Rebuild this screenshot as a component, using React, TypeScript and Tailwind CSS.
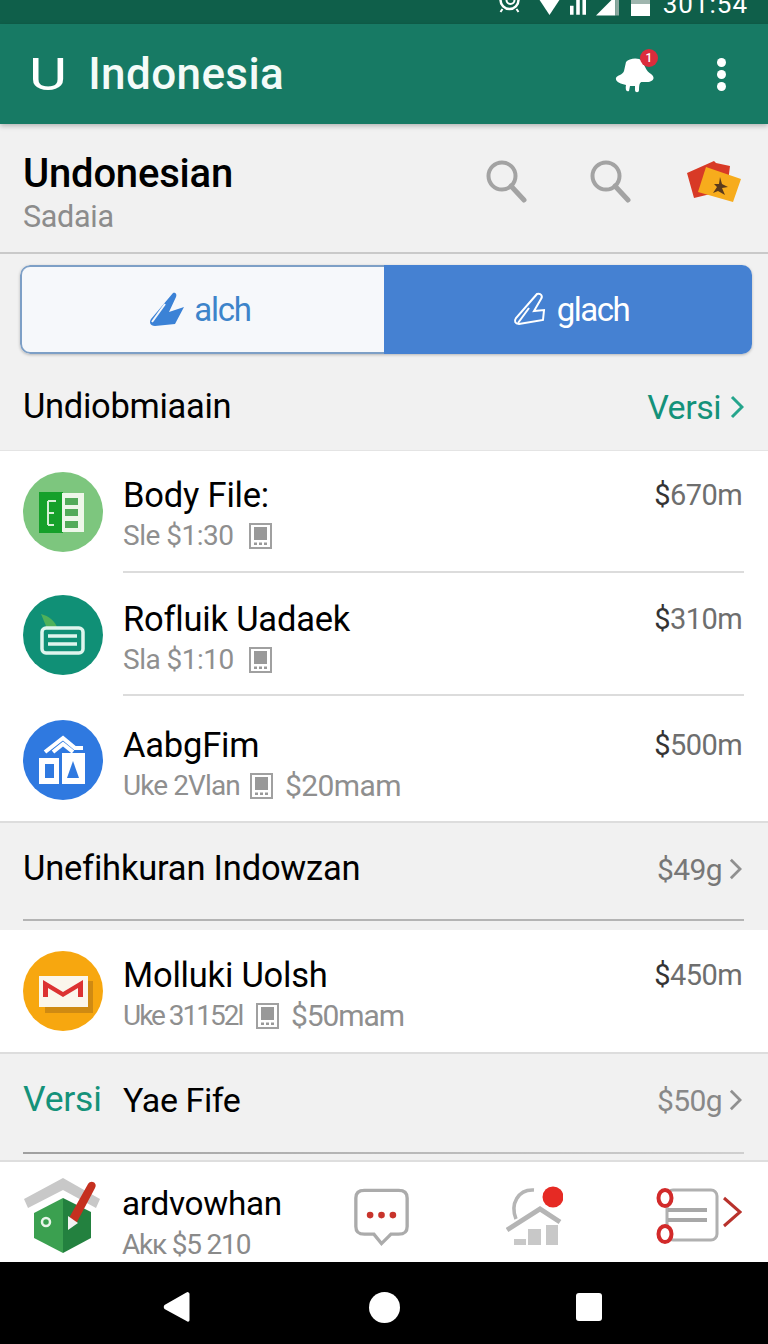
import React from "react";

const font = { fontFamily: "Roboto, 'Noto Sans', sans-serif" };

function Search({ className }: { className: string }) {
  return (
    <svg className={className} viewBox="0 0 42 44" fill="none">
      <circle cx="17" cy="17" r="13.5" stroke="#a3a3a3" strokeWidth="4" />
      <path d="M26 27 L39 41" stroke="#a3a3a3" strokeWidth="5" strokeLinecap="round" />
    </svg>
  );
}

function Device() {
  return (
    <svg className="h-[26px] w-[23px] shrink-0" viewBox="0 0 23 26">
      <rect x="1" y="1" width="21" height="24" fill="#fff" stroke="#a0a0a0" strokeWidth="2" />
      <rect x="5" y="4" width="13" height="13" fill="#999" />
      <rect x="5" y="19.5" width="3" height="2.5" fill="#999" />
      <rect x="10" y="19.5" width="3" height="2.5" fill="#999" />
      <rect x="15" y="19.5" width="3" height="2.5" fill="#999" />
    </svg>
  );
}

function Sheets() {
  return (
    <svg className="h-[80px] w-[80px]" viewBox="0 0 80 80">
      <circle cx="40" cy="40" r="40" fill="#7dc67e" />
      <rect x="16" y="20" width="24" height="41" fill="#15a02a" />
      <rect x="39" y="21" width="22" height="39" fill="#eef7ea" />
      <path d="M25 29h8M25 29v24M25 41h6M25 53h6" stroke="#d6f0d6" strokeWidth="2" fill="none" />
      <rect x="42" y="26" width="13" height="7" fill="#53ab5a" />
      <rect x="42" y="37" width="13" height="7" fill="#53ab5a" />
      <rect x="42" y="49" width="13" height="7" fill="#53ab5a" />
    </svg>
  );
}

function Card() {
  return (
    <svg className="h-[80px] w-[80px]" viewBox="0 0 80 80">
      <circle cx="40" cy="40" r="40" fill="#109076" />
      <path d="M18 19 C26 21 32 26 35 34 L24 34 C22 28 20 24 18 19Z" fill="#4fb15a" />
      <rect x="19" y="33" width="41" height="25" rx="4" fill="none" stroke="#dff5ee" strokeWidth="3.5" />
      <path d="M25 41h29M25 49h29" stroke="#dff5ee" strokeWidth="3.5" />
    </svg>
  );
}

function Shop() {
  return (
    <svg className="h-[80px] w-[80px]" viewBox="0 0 80 80">
      <circle cx="40" cy="40" r="40" fill="#2f79e0" />
      <path d="M22 32 L40 18 L52 28 L60 28 M30 32 L40 24 L50 32" stroke="#fff" strokeWidth="4" fill="none" />
      <rect x="16" y="38" width="20" height="26" fill="#fff" />
      <rect x="22" y="44" width="9" height="14" fill="#2f79e0" />
      <rect x="39" y="33" width="23" height="31" fill="#fff" />
      <path d="M50 41 L56 58 L44 58Z" fill="#2f79e0" />
    </svg>
  );
}

function Mail() {
  return (
    <svg className="h-[80px] w-[80px]" viewBox="0 0 80 80">
      <circle cx="40" cy="40" r="40" fill="#f7a70f" />
      <rect x="22" y="30" width="48" height="32" fill="#cf8a12" />
      <rect x="16" y="25" width="49" height="31" fill="#fbf6ec" />
      <path d="M20 29 L40 41 L60 29 L60 46 L55 46 L55 37 L40 46 L25 37 L25 46 L20 46Z" fill="#dc3232" />
    </svg>
  );
}

type RowProps = {
  icon: React.ReactNode;
  title: string;
  left: string;
  right?: string;
  rightClass?: string;
  price: string;
  rowClass: string;
  bodyClass: string;
  leftClass: string;
  divider?: boolean;
};

function Row({ icon, title, left, right, rightClass, price, rowClass, bodyClass, leftClass, divider }: RowProps) {
  return (
    <div className={`flex bg-white pl-[23px] pr-6 ${rowClass}`}>
      <div className="mr-5 flex items-center">{icon}</div>
      <div className={`flex min-w-0 flex-1 ${bodyClass} ${divider ? "border-b-2 border-[#dcdcdc]" : ""}`}>
        <div className="flex-1">
          <div className="text-[34.5px] leading-[40px] tracking-[-0.2px] text-black">{title}</div>
          <div className="mt-[4px] flex items-center text-[28px] leading-[34px] tracking-[-0.5px] text-[#8f8f8f]">
            <span className={`shrink-0 whitespace-nowrap ${leftClass}`}>{left}</span>
            <Device />
            {right && <span className={`ml-[12px] text-[30px] ${rightClass}`}>{right}</span>}
          </div>
        </div>
        <div className="mr-[2px] text-[29px] leading-[40px] tracking-[-0.6px] text-[#6e6e6e]">
          <span className="text-[#333]">$</span>
          {price}
        </div>
      </div>
    </div>
  );
}

function Chevron({ color, className }: { color: string; className: string }) {
  return (
    <svg className={className} viewBox="0 0 14 24" fill="none">
      <path d="M2 2 L12 12 L2 22" stroke={color} strokeWidth="3" />
    </svg>
  );
}

export default function App() {
  return (
    <div className="flex h-[1344px] w-[768px] flex-col overflow-hidden bg-[#f1f1f1]" style={font}>
      <div className="flex h-6 shrink-0 items-start justify-end overflow-hidden bg-[#0f5f4a] pr-[20px]">
        <div className="-mt-2 flex h-[24px] items-center text-white">
          <svg className="mr-[13px] h-[22px] w-[25px]" viewBox="0 0 24 22" fill="none">
            <circle cx="12" cy="7" r="9" stroke="#fff" strokeWidth="2.5" />
            <circle cx="13" cy="7" r="4" stroke="#fff" strokeWidth="2" />
            <path d="M5 16l-2 3M19 16l2 3" stroke="#fff" strokeWidth="2" />
          </svg>
          <svg className="mr-[6px] h-[24px] w-[29px]" viewBox="0 0 32 24">
            <path d="M0 0 H32 L16 24Z" fill="#fff" />
          </svg>
          <svg className="mr-[10px] h-[24px] w-[16px]" viewBox="0 0 18 24">
            <path d="M0 14h4v10H0zM7 7h4v17H7zM14 0h4v24h-4z" fill="#fff" />
          </svg>
          <svg className="mr-[12px] h-[24px] w-[23px]" viewBox="0 0 24 24">
            <path d="M0 24 L20 4 V24Z" fill="#fff" />
            <path d="M20 0h4v24h-4z" fill="#8aa89f" />
          </svg>
          <div className="mr-[13px] flex h-[24px] w-[19px] flex-col">
            <div className="h-[12px] bg-[#9fb5ae]" />
            <div className="h-[12px] bg-white" />
          </div>
          <span className="text-[26px] leading-[24px] tracking-[1px]">301:54</span>
        </div>
      </div>

      <header className="z-10 flex h-[100px] shrink-0 items-center bg-[#177a64] pl-[29px] pr-[42px] shadow-[0_2px_5px_rgba(0,0,0,0.25)]">
        <span className="origin-left scale-x-[1.3] text-[45px] leading-none text-white">U</span>
        <span className="ml-[30px] flex-1 text-[44px] font-medium leading-none tracking-[0.4px] text-[#f4fbf8]">Indonesia</span>
        <div className="relative mr-[62px] mt-[6px] h-[40px] w-[40px]">
          <svg className="h-[40px] w-[40px]" viewBox="0 0 40 40">
            <path
              d="M11 5 C14 1 24 0 27 4 C30 9 31 14 36 17 C41 21 38 25 32 25 L27 25 C25 25 24 27 24 33 C24 36 20 36 20 33 L20 29 L15 29 L14 34 C12 35 10 34 11 28 C6 27 0 25 1 21 C2 18 8 18 9 14Z"
              fill="#fff"
            />
          </svg>
          <span className="absolute right-[-3px] top-[-8px] flex h-[18px] w-[18px] items-center justify-center rounded-full bg-[#dc2c3c] text-[12px] font-medium leading-none text-white">
            1
          </span>
        </div>
        <div className="flex flex-col gap-[3px]">
          <span className="h-[9px] w-[9px] rounded-full bg-white" />
          <span className="h-[9px] w-[9px] rounded-full bg-white" />
          <span className="h-[9px] w-[9px] rounded-full bg-white" />
        </div>
      </header>

      <section className="flex h-[130px] shrink-0 items-center border-b-2 border-[#c9c9c9] pl-[23px] pr-[27px]">
        <div className="mt-[10px] flex-1">
          <div className="text-[40px] font-medium leading-[46px] tracking-[-0.2px] text-black">Undonesian</div>
          <div className="mt-[2px] text-[30.5px] leading-[36px] tracking-[-0.3px] text-[#8c8c8c]">Sadaia</div>
        </div>
        <Search className="mb-[14px] mr-[62px] h-[44px] w-[42px]" />
        <Search className="mb-[14px] mr-[56px] h-[44px] w-[42px]" />
        <svg className="mb-[14px] h-[42px] w-[54px]" viewBox="0 0 54 42">
          <path d="M0 13 L27 1 L29 3 L43 6 L40 30 L7 38Z" fill="#d83a26" />
          <path d="M19 7 L54 19 L46 42 L11 32Z" fill="#f7ac1c" />
          <path d="M33 17 L35 24 L41 27 L35 28 L38 35 L31 31 L26 33 L30 27 L27 24 L32 24Z" fill="#5a3a1c" />
        </svg>
      </section>

      <div className="ml-5 mt-[11px] flex h-[89px] w-[732px] shrink-0 overflow-hidden rounded-[10px] shadow-[0_1px_3px_rgba(0,0,0,0.25)]">
        <div className="flex w-[364px] items-center justify-center gap-[9px] rounded-l-[10px] border-2 border-r-0 border-[#7d9fc6] bg-[#f6f8fb] pr-[6px] text-[33px] tracking-[-1.2px] text-[#3d84ca]">
          <svg className="h-[36px] w-[36px]" viewBox="0 0 36 36">
            <path d="M24 1 C27 0 28 3 27 5 L20 20 L35 15 L26 32 L6 34 C1 34 0 30 2 27 Z" fill="#3b82d6" />
            <path d="M3 30 L16 12" stroke="#f6f8fb" strokeWidth="2" />
          </svg>
          <span>alch</span>
        </div>
        <div className="flex flex-1 items-center justify-center gap-[8px] bg-[#4581d2] pl-[6px] text-[33px] tracking-[-1.5px] text-white">
          <svg className="h-[36px] w-[36px]" viewBox="0 0 36 36" fill="none">
            <path d="M24 2 C28 1 30 4 28 7 L21 19 L31 18 L30 28 L6 32 C2 32 1 29 3 26 Z" stroke="#fff" strokeWidth="2" />
            <path d="M5 31 L16 16" stroke="#fff" strokeWidth="2" />
          </svg>
          <span>glach</span>
        </div>
      </div>

      <div className="flex h-[97px] shrink-0 items-center justify-between border-b border-[#e4e4e4] pl-[23px] pr-6 pt-[10px]">
        <span className="text-[34.5px] tracking-[-0.3px] text-black">Undiobmiaain</span>
        <span className="flex items-center gap-[9px] text-[34px] tracking-[-0.5px] text-[#14927a]">
          Versi
          <Chevron color="#25a58c" className="h-[24px] w-[14px]" />
        </span>
      </div>

      <Row icon={<Sheets />} title="Body File:" left="Sle $1:30" price="670m" rowClass="h-[122px]" bodyClass="pt-[24px]" leftClass="w-[126px]" divider />
      <Row icon={<Card />} title="Rofluik Uadaek" left="Sla $1:10" price="310m" rowClass="h-[123px]" bodyClass="pt-[26px]" leftClass="w-[126px]" divider />
      <Row icon={<Shop />} title="AabgFim" left="Uke 2Vlan" right="$20mam" rightClass="tracking-[-0.6px]" price="500m" rowClass="h-[125px] pt-[2px]" bodyClass="pt-[27px]" leftClass="w-[127px] tracking-[-0.9px]" />

      <div className="flex h-[109px] shrink-0 flex-col border-t-2 border-[#dddddd] pl-[23px] pr-6">
        <div className="flex h-[96px] items-center justify-between pb-[4px]">
          <span className="text-[34.5px] tracking-[-0.2px] text-black">Unefihkuran Indowzan</span>
          <span className="flex items-center gap-[7px] text-[30px] tracking-[-0.6px] text-[#777]">
            $49g
            <Chevron color="#909090" className="mr-[2px] h-[24px] w-[13px]" />
          </span>
        </div>
        <div className="h-[2px] bg-[#b4b4b4]" />
      </div>

      <Row icon={<Mail />} title="Molluki Uolsh" left="Uke 31152l" right="$50mam" rightClass="tracking-[-1.1px]" price="450m" rowClass="h-[122px]" bodyClass="pt-[25px]" leftClass="w-[133px] tracking-[-2px]" />

      <div className="flex h-[108px] shrink-0 flex-col border-t-2 border-[#dddddd] pl-[23px] pr-6">
        <div className="flex h-[98px] items-center pb-[6px]">
          <span className="w-[100px] text-[35.5px] tracking-[-0.2px] text-[#14927a]">Versi</span>
          <span className="flex-1 text-[34px] tracking-[-0.4px] text-black">Yae Fife</span>
          <span className="flex items-center gap-[7px] text-[30px] tracking-[-0.6px] text-[#888]">
            $50g
            <Chevron color="#909090" className="mr-[2px] h-[24px] w-[13px]" />
          </span>
        </div>
        <div className="h-[2px] bg-gradient-to-r from-[#a0a0a0] to-[#cfcfcf]" />
      </div>

      <footer className="flex h-[102px] shrink-0 items-center border-t-2 border-[#dedede] bg-white pl-[24px] pt-[8px]">
        <svg className="mr-[22px] h-[76px] w-[76px] shrink-0" viewBox="0 0 76 76">
          <path d="M0 21 L39 0 L76 21 L72 30 L39 12 L4 30Z" fill="#c8c8c8" />
          <path d="M39 20 L10 35 L10 60 L39 75Z" fill="#3ba050" />
          <path d="M39 20 L67 34 L67 60 L39 75Z" fill="#23813f" />
          <circle cx="22" cy="44" r="4" fill="none" stroke="#e8f5e9" strokeWidth="2.5" />
          <path d="M45 40 L64 6 C67 1 74 5 71 10 L53 44 L45 48Z" fill="#c5301f" />
          <path d="M44 38 L54 45 L44 52Z" fill="#f2f2f2" />
        </svg>
        <div className="mt-[8px] w-[231px] shrink-0">
          <div className="text-[33.3px] leading-[40px] tracking-[-0.3px] text-black">ardvowhan</div>
          <div className="mt-[1px] -mb-[8px] text-[28px] leading-[40px] tracking-[-1.2px] text-[#8a8a8a]">Akк $5 210</div>
        </div>
        <svg className="mr-[96px] mt-[1px] h-[60px] w-[57px] shrink-0" viewBox="0 0 60 60" fill="none">
          <path d="M12 2 H48 C54 2 57 5 57 10 V40 C57 46 54 48 48 48 H40 L30 58 L22 48 H12 C6 48 3 46 3 40 V10 C3 5 6 2 12 2Z" stroke="#ababab" strokeWidth="3.5" />
          <circle cx="18" cy="28" r="3.5" fill="#c8342c" />
          <circle cx="30" cy="28" r="3.5" fill="#c8342c" />
          <circle cx="42" cy="28" r="3.5" fill="#c8342c" />
        </svg>
        <svg className="mr-[93px] h-[60px] w-[57px] shrink-0" viewBox="0 0 57 60" fill="none">
          <path d="M10 33 C4 18 12 3 28 4" stroke="#b5b5b5" strokeWidth="3.5" />
          <path d="M1 44 L34 23 L54 36" stroke="#b5b5b5" strokeWidth="5" />
          <path d="M8 59 V53 H20 V59ZM22 59 V43 H35 V59ZM40 59 V39 H52 V59Z" fill="#c8c8c8" />
          <circle cx="47" cy="11" r="10.5" fill="#e62a24" />
        </svg>
        <svg className="h-[56px] w-[86px] shrink-0" viewBox="0 0 86 56" fill="none">
          <rect x="11" y="2" width="50" height="50" rx="6" stroke="#b0b0b0" strokeWidth="3" />
          <path d="M12 22 H51 M12 32 H51" stroke="#a8a8a8" strokeWidth="4" />
          <ellipse cx="9" cy="10" rx="6.5" ry="8" stroke="#d22a2a" strokeWidth="4" fill="#fff" />
          <ellipse cx="9" cy="46" rx="6.5" ry="8" stroke="#d22a2a" strokeWidth="4" fill="#fff" />
          <path d="M68 10 L84 24 L68 38" stroke="#b8322c" strokeWidth="3" />
        </svg>
      </footer>

      <nav className="flex flex-1 items-center bg-black pl-[163px] pt-[8px]">
        <svg className="mr-[179px] h-[30px] w-[27px]" viewBox="0 0 26 30">
          <path d="M24 0 C25 0 26 1 26 2 V28 C26 30 24 30 23 29 L1 17 C0 16 0 14 1 13 L22 1Z" fill="#fff" />
        </svg>
        <span className="mr-[176px] h-[31px] w-[31px] rounded-full bg-white" />
        <span className="h-[28px] w-[26px] rounded-[3px] bg-white" />
      </nav>
    </div>
  );
}
